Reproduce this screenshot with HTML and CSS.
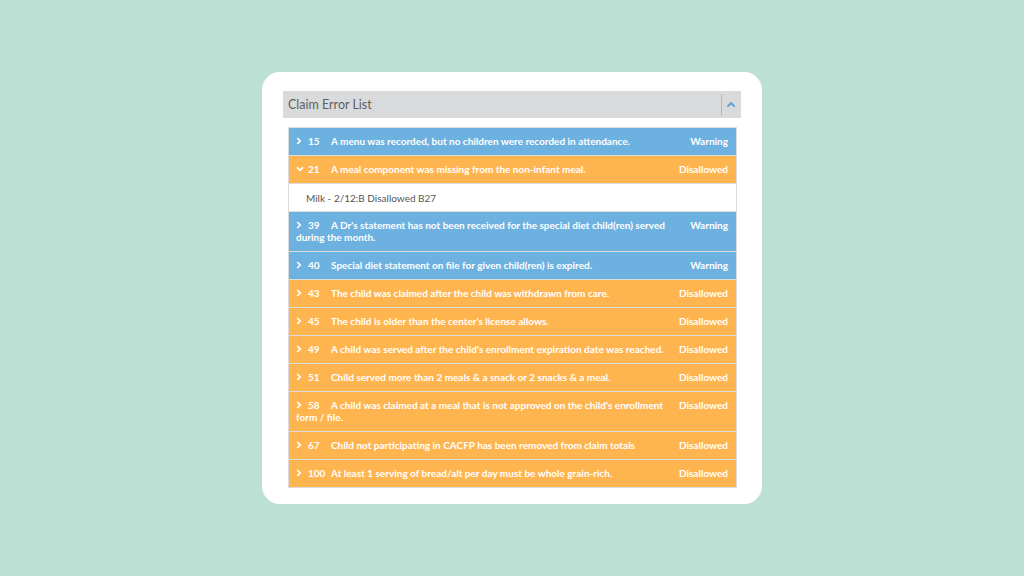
FILE: index.html
```html
<!DOCTYPE html>
<html>
<head>
<meta charset="utf-8">
<link rel="stylesheet" href="styles.css">
</head>
<body>
<div class="card">
  <div class="panel-head">
    <span class="panel-title">Claim Error List</span>
    <span class="panel-toggle">
      <svg width="10" height="7" viewBox="0 0 10 7"><path d="M1.5 5.5 L5 2 L8.5 5.5" fill="none" stroke="#5b9fd4" stroke-width="1.8"/></svg>
    </span>
  </div>
  <div class="list">
    <div class="row warn"><span class="status">Warning</span><span class="chev"><svg width="6" height="8" viewBox="0 0 6 8"><path d="M1.2 1 L4.2 4 L1.2 7" fill="none" stroke="#fff" stroke-width="1.7"/></svg></span><span class="num">15</span>A menu was recorded, but no children were recorded in attendance.</div>
    <div class="row dis"><span class="status">Disallowed</span><span class="chev"><svg width="8" height="6" viewBox="0 0 8 6"><path d="M1 1.3 L4 4.3 L7 1.3" fill="none" stroke="#fff" stroke-width="1.7"/></svg></span><span class="num">21</span>A meal component was missing from the non-infant meal.</div>
    <div class="detail">Milk - 2/12:B Disallowed B27</div>
    <div class="row warn"><span class="status">Warning</span><span class="chev"><svg width="6" height="8" viewBox="0 0 6 8"><path d="M1.2 1 L4.2 4 L1.2 7" fill="none" stroke="#fff" stroke-width="1.7"/></svg></span><span class="num">39</span>A Dr's statement has not been received for the special diet child(ren) served during the month.</div>
    <div class="row warn"><span class="status">Warning</span><span class="chev"><svg width="6" height="8" viewBox="0 0 6 8"><path d="M1.2 1 L4.2 4 L1.2 7" fill="none" stroke="#fff" stroke-width="1.7"/></svg></span><span class="num">40</span>Special diet statement on file for given child(ren) is expired.</div>
    <div class="row dis"><span class="status">Disallowed</span><span class="chev"><svg width="6" height="8" viewBox="0 0 6 8"><path d="M1.2 1 L4.2 4 L1.2 7" fill="none" stroke="#fff" stroke-width="1.7"/></svg></span><span class="num">43</span>The child was claimed after the child was withdrawn from care.</div>
    <div class="row dis"><span class="status">Disallowed</span><span class="chev"><svg width="6" height="8" viewBox="0 0 6 8"><path d="M1.2 1 L4.2 4 L1.2 7" fill="none" stroke="#fff" stroke-width="1.7"/></svg></span><span class="num">45</span>The child is older than the center's license allows.</div>
    <div class="row dis"><span class="status">Disallowed</span><span class="chev"><svg width="6" height="8" viewBox="0 0 6 8"><path d="M1.2 1 L4.2 4 L1.2 7" fill="none" stroke="#fff" stroke-width="1.7"/></svg></span><span class="num">49</span>A child was served after the child's enrollment expiration date was reached.</div>
    <div class="row dis"><span class="status">Disallowed</span><span class="chev"><svg width="6" height="8" viewBox="0 0 6 8"><path d="M1.2 1 L4.2 4 L1.2 7" fill="none" stroke="#fff" stroke-width="1.7"/></svg></span><span class="num">51</span>Child served more than 2 meals &amp; a snack or 2 snacks &amp; a meal.</div>
    <div class="row dis"><span class="status">Disallowed</span><span class="chev"><svg width="6" height="8" viewBox="0 0 6 8"><path d="M1.2 1 L4.2 4 L1.2 7" fill="none" stroke="#fff" stroke-width="1.7"/></svg></span><span class="num">58</span>A child was claimed at a meal that is not approved on the child's enrollment form / file.</div>
    <div class="row dis"><span class="status">Disallowed</span><span class="chev"><svg width="6" height="8" viewBox="0 0 6 8"><path d="M1.2 1 L4.2 4 L1.2 7" fill="none" stroke="#fff" stroke-width="1.7"/></svg></span><span class="num">67</span>Child not participating in CACFP has been removed from claim totals</div>
    <div class="row dis"><span class="status">Disallowed</span><span class="chev"><svg width="6" height="8" viewBox="0 0 6 8"><path d="M1.2 1 L4.2 4 L1.2 7" fill="none" stroke="#fff" stroke-width="1.7"/></svg></span><span class="num">100</span>At least 1 serving of bread/alt per day must be whole grain-rich.</div>
  </div>
</div>
</body>
</html>
```
FILE: styles.css
```css
html, body {
  margin: 0;
  padding: 0;
}
body {
  width: 1024px;
  height: 576px;
  background: #bde0d5;
  display: flex;
  align-items: center;
  justify-content: center;
  font-family: Lato, "Open Sans", sans-serif;
}
.card {
  width: 500px;
  height: 432px;
  box-sizing: border-box;
  background: #fff;
  border-radius: 18px;
  padding: 19px 21px 17px 21px;
}
.panel-head {
  height: 27px;
  background: #d9dadb;
  display: flex;
  align-items: center;
  padding-left: 5px;
}
.panel-title {
  flex: 1;
  font-size: 12.5px;
  color: #5f6061;
}
.panel-toggle {
  width: 18px;
  height: 22px;
  border-left: 1px solid #b8babc;
  display: flex;
  align-items: center;
  justify-content: center;
  margin-right: 1px;
}
.list {
  margin: 9px 4px 0 5px;
  border: 1px solid #dcdcdc;
  border-bottom: none;
}
.row {
  padding: 7px 8px 8px 7px;
  line-height: 12px;
  font-size: 10px;
  font-weight: bold;
  color: #fff;
  border-bottom: 1px solid #dcdcdc;
}
.row::after {
  content: "";
  display: block;
  clear: both;
}
.warn { background: #6db1e0; }
.dis { background: #ffb54f; }
.chev {
  display: inline-block;
  width: 12px;
  vertical-align: top;
  height: 12px;
  line-height: 12px;
}
.chev svg {
  display: inline-block;
  vertical-align: middle;
  margin-top: -2px;
}
.num {
  display: inline-block;
  width: 23px;
}
.status {
  float: right;
  width: 50px;
  margin-left: 4px;
  text-align: right;
}
.detail {
  padding: 8px 0 7px 17px;
  line-height: 12px;
  font-size: 10px;
  color: #555;
  background: #fff;
  border-bottom: 1px solid #dcdcdc;
}
```
